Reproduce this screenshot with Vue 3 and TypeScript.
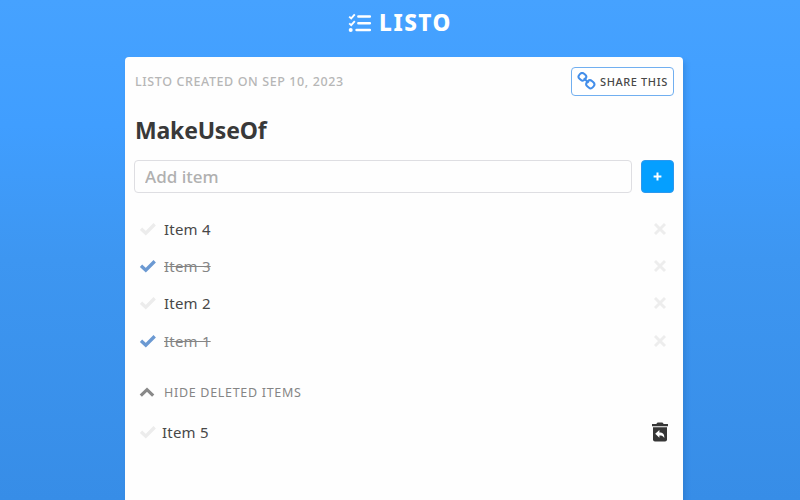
<script setup lang="ts">
import { ref } from 'vue'

interface Item {
  id: number
  name: string
  done: boolean
}

const title = ref('MakeUseOf')
const draft = ref('')
const items = ref<Item[]>([
  { id: 4, name: 'Item 4', done: false },
  { id: 3, name: 'Item 3', done: true },
  { id: 2, name: 'Item 2', done: false },
  { id: 1, name: 'Item 1', done: true },
])
const deleted = ref<Item[]>([{ id: 5, name: 'Item 5', done: false }])
</script>

<template>
  <div class="page">
    <header class="brand">
      <svg class="brand-icon" width="24" height="20" viewBox="0 0 24 20" fill="none" stroke="#fff">
        <path d="M1.2 3.6 3.2 5.4 6.8 1.4M1.2 10.4 3.2 12.2 6.8 8.2" stroke-width="1.9" />
        <circle cx="2.7" cy="17" r="2" fill="#fff" stroke="none" />
        <path d="M10.4 3.5H21.8M10.4 10.2H21.8M8.6 17H21.8" stroke-width="2.6" stroke-linecap="round" />
      </svg>
      <span class="brand-name">LISTO</span>
    </header>

    <main class="card">
      <div class="meta">
        <span class="created">LISTO CREATED ON SEP 10, 2023</span>
        <button class="share" type="button">
          <svg width="19" height="19" viewBox="0 0 19 19" fill="none" stroke="#438eea" stroke-width="2">
            <rect x="1.8" y="1.4" width="7.2" height="6.8" rx="2.8" transform="rotate(42 5.4 4.8)" />
            <rect x="9.5" y="8.8" width="7.6" height="7" rx="2.8" transform="rotate(42 13.3 12.3)" />
            <path d="M6.8 6.2 11.6 10.8" />
          </svg>
          <span class="share-text">SHARE THIS</span>
        </button>
      </div>

      <h1 class="title">{{ title }}</h1>

      <form class="add" @submit.prevent>
        <input v-model="draft" class="field" type="text" placeholder="Add item" />
        <button class="plus" type="submit">
          <svg width="9" height="9" viewBox="0 0 9 9"><path d="M4.5 .6V8.4M.6 4.5H8.4" stroke="#fff" stroke-width="2" /></svg>
        </button>
      </form>

      <ul class="items">
        <li v-for="item in items" :key="item.id" class="item" :class="{ done: item.done }">
          <svg class="check" width="18" height="14" viewBox="0 0 18 14"><path d="M2 6.8 6.8 11.2 15.7 2.3" /></svg>
          <span class="name">{{ item.name }}</span>
          <svg class="remove" width="14" height="14" viewBox="0 0 14 14"><path d="M2 2 12 12M12 2 2 12" /></svg>
        </li>
      </ul>

      <div class="toggle">
        <svg width="18" height="12" viewBox="0 0 18 12"><path d="M1.8 9.7 8 3.7 14.2 9.7" fill="none" stroke="#898989" stroke-width="3.2" /></svg>
        <span class="toggle-text">HIDE DELETED ITEMS</span>
      </div>

      <ul class="deleted">
        <li v-for="item in deleted" :key="item.id" class="item">
          <svg class="check" width="18" height="14" viewBox="0 0 18 14"><path d="M2 6.8 6.8 11.2 15.7 2.3" /></svg>
          <span class="name">{{ item.name }}</span>
          <svg class="restore" width="18" height="20" viewBox="0 0 18 20">
            <path d="M1 2H5.3L6.2.8Q6.5.4 7 .4H11Q11.5.4 11.8.8L12.7 2H17V4.2H1Z" fill="#363636" />
            <path d="M2 5.2H16V17.4Q16 19.4 14 19.4H4Q2 19.4 2 17.4Z" fill="#363636" />
            <path d="M8.4 8V10.4C11.8 10.4 13.6 12 13.3 16C12 13.8 11 13.4 8.4 13.4V15.7L4.2 11.8Z" fill="#fff" />
          </svg>
        </li>
      </ul>
    </main>
  </div>
</template>

<style>
body {
  margin: 0;
  overflow: hidden;
}
</style>

<style scoped>
* {
  box-sizing: border-box;
}

.page {
  height: 500px;
  overflow: hidden;
  display: flex;
  flex-direction: column;
  align-items: center;
  background: linear-gradient(180deg, #46a2ff 0%, #409eff 25%, #3d96f1 52%, #378de7 100%);
  font-family: 'Noto Sans', sans-serif;
  color: #484848;
}

.brand {
  flex: none;
  display: flex;
  align-items: center;
  gap: 7px;
  height: 57px;
  padding: 0 0 11px;
}

.brand-name {
  font-size: 22.5px;
  line-height: 30px;
  font-weight: 800;
  letter-spacing: 1.5px;
  color: #fff;
}

.card {
  flex: 1;
  width: 558px;
  margin-left: 8px;
  padding: 9px 9px 0;
  background: #fefefe;
  border-radius: 4px 4px 0 0;
  box-shadow: 3px 4px 5px rgba(25, 80, 150, 0.22);
}

.meta {
  display: flex;
  align-items: center;
  justify-content: space-between;
  height: 30px;
  padding-left: 1px;
}

.created {
  font-size: 12.5px;
  font-weight: 500;
  letter-spacing: 0.6px;
  color: #b6b6b6;
}

.share {
  display: flex;
  align-items: center;
  width: 103px;
  height: 29px;
  padding: 0 0 0 5px;
  gap: 4px;
  font-family: inherit;
  border: 1px solid #71aff0;
  border-radius: 4px;
  background: #fff;
  color: #484848;
}

.share-text {
  font-size: 11px;
  font-weight: 500;
  letter-spacing: 0.6px;
  white-space: nowrap;
}

.title {
  margin: 17px 0 0 1px;
  font-size: 23px;
  line-height: 34px;
  font-weight: 700;
  letter-spacing: -0.2px;
  color: #393939;
}

.add {
  display: flex;
  gap: 9px;
  margin-top: 13px;
}

.field {
  flex: 1;
  min-width: 0;
  height: 33px;
  padding: 0 10px;
  border: 1px solid #dedee2;
  border-radius: 4px;
  background: #fefefe;
  font-family: inherit;
  font-size: 17px;
  font-weight: 500;
  outline: none;
}

.field::placeholder {
  color: #b0b0b0;
  opacity: 1;
}

.plus {
  display: flex;
  align-items: center;
  justify-content: center;
  width: 33px;
  height: 33px;
  padding: 0;
  border: 1px solid #2c98ee;
  border-radius: 4px;
  background: #059fff;
}

.items,
.deleted {
  margin: 0;
  padding: 0 7px 0 5px;
  list-style: none;
}

.items {
  margin-top: 17px;
}

.item {
  display: flex;
  align-items: center;
  height: 37.3px;
}

.check {
  fill: none;
  stroke: #ececec;
  stroke-width: 3.4;
}

.name {
  flex: 1;
  margin-left: 7px;
  font-size: 15px;
  line-height: 22px;
  letter-spacing: 0.2px;
}

.name,
.toggle-text {
  white-space: nowrap;
}

.remove {
  fill: none;
  stroke: #ededed;
  stroke-width: 3;
}

.done .check {
  stroke: #6b99d2;
}

.done .name {
  flex: none;
  margin-right: auto;
  color: #858585;
  text-decoration: line-through;
}

.toggle {
  display: flex;
  align-items: center;
  gap: 7px;
  height: 30px;
  margin-top: 18px;
  padding-left: 5px;
}

.toggle-text {
  font-size: 12.5px;
  letter-spacing: 0.7px;
  color: #858585;
}

.deleted {
  margin-top: 6px;
  padding-right: 5px;
}

.deleted .name {
  margin-left: 5px;
}
</style>
